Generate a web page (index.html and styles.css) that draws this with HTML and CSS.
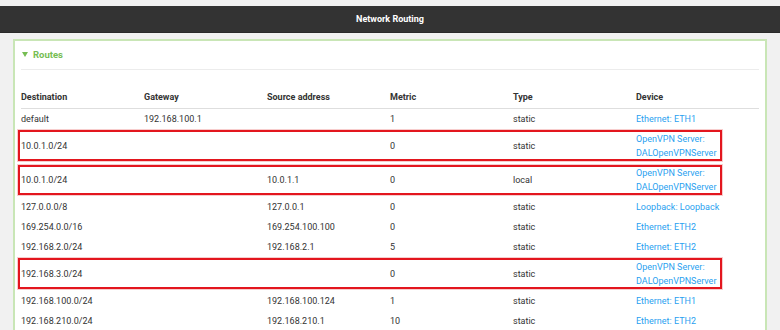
FILE: index.html
```html
<!DOCTYPE html>
<html lang="en">
<head>
    <meta charset="UTF-8">
    <title>Network Routing</title>
    <link rel="stylesheet" href="styles.css">
</head>
<body>
    <div class="topbar">Network Routing</div>

    <div class="panel">
        <div class="panel-head">
            <svg class="caret" width="6" height="5" viewBox="0 0 6 5"><polygon points="0,0 6,0 3,5" fill="#76bd53"/></svg>
            <span>Routes</span>
        </div>

        <div class="routes">
            <div class="row head">
                <div>Destination</div>
                <div>Gateway</div>
                <div>Source address</div>
                <div>Metric</div>
                <div>Type</div>
                <div>Device</div>
            </div>
            <div class="row">
                <div>default</div>
                <div>192.168.100.1</div>
                <div></div>
                <div>1</div>
                <div>static</div>
                <div><a href="#">Ethernet: ETH1</a></div>
            </div>
            <div class="row marked">
                <div>10.0.1.0/24</div>
                <div></div>
                <div></div>
                <div>0</div>
                <div>static</div>
                <div><a href="#">OpenVPN Server: DALOpenVPNServer</a></div>
            </div>
            <div class="row marked second">
                <div>10.0.1.0/24</div>
                <div></div>
                <div>10.0.1.1</div>
                <div>0</div>
                <div>local</div>
                <div><a href="#">OpenVPN Server: DALOpenVPNServer</a></div>
            </div>
            <div class="row">
                <div>127.0.0.0/8</div>
                <div></div>
                <div>127.0.0.1</div>
                <div>0</div>
                <div>static</div>
                <div><a href="#">Loopback: Loopback</a></div>
            </div>
            <div class="row">
                <div>169.254.0.0/16</div>
                <div></div>
                <div>169.254.100.100</div>
                <div>0</div>
                <div>static</div>
                <div><a href="#">Ethernet: ETH2</a></div>
            </div>
            <div class="row">
                <div>192.168.2.0/24</div>
                <div></div>
                <div>192.168.2.1</div>
                <div>5</div>
                <div>static</div>
                <div><a href="#">Ethernet: ETH2</a></div>
            </div>
            <div class="row marked">
                <div>192.168.3.0/24</div>
                <div></div>
                <div></div>
                <div>0</div>
                <div>static</div>
                <div><a href="#">OpenVPN Server: DALOpenVPNServer</a></div>
            </div>
            <div class="row">
                <div>192.168.100.0/24</div>
                <div></div>
                <div>192.168.100.124</div>
                <div>1</div>
                <div>static</div>
                <div><a href="#">Ethernet: ETH1</a></div>
            </div>
            <div class="row">
                <div>192.168.210.0/24</div>
                <div></div>
                <div>192.168.210.1</div>
                <div>10</div>
                <div>static</div>
                <div><a href="#">Ethernet: ETH2</a></div>
            </div>
        </div>
    </div>
</body>
</html>
```

FILE: styles.css
```css
/* Page */
body {
    margin: 0;
    padding-top: 6px;
    background: #f1f1f1;
    font-family: Roboto, "Liberation Sans", sans-serif;
    font-size: 9px;
    color: #333;
    overflow: hidden;
}

/* Top bar */
.topbar {
    height: 26px;
    line-height: 26px;
    background: #333;
    border-bottom: 1px solid #2a2a2a;
    color: #fff;
    font-weight: bold;
    text-align: center;
}

/* Panel */
.panel {
    margin: 6px 13px 0;
    padding: 0 6px;
    background: #fff;
    border: 2px solid #c9e6b6;
}

.panel-head {
    display: flex;
    align-items: center;
    gap: 5px;
    height: 26px;
    padding: 0 1px 2px;
    border-bottom: 1px solid #ececec;
    color: #76bd53;
    font-size: 9.5px;
    font-weight: bold;
}

.caret {
    margin-top: 1px;
}

/* Routes table */
.routes {
    margin-top: 17px;
}

.row {
    display: grid;
    grid-template-columns: repeat(6, 1fr);
    align-items: center;
    padding: 3px 0;
    line-height: 14px;
}

.row.head {
    padding-bottom: 4px;
    border-bottom: 1px solid #dedede;
    font-weight: bold;
}

.row a {
    color: #2a9ff0;
    text-decoration: none;
}

.row div:last-child {
    padding-right: 20px;
}

/* Annotation boxes */
.row.marked {
    position: relative;
}

.row.marked::after {
    content: '';
    position: absolute;
    top: 1px;
    bottom: 2px;
    left: -3px;
    right: 37px;
    border: 2px solid #e3161e;
    box-shadow: 0 0 0 1px rgba(230, 90, 90, 0.3);
}

.row.marked.second::after {
    top: 2px;
    bottom: 2px;
}
```
